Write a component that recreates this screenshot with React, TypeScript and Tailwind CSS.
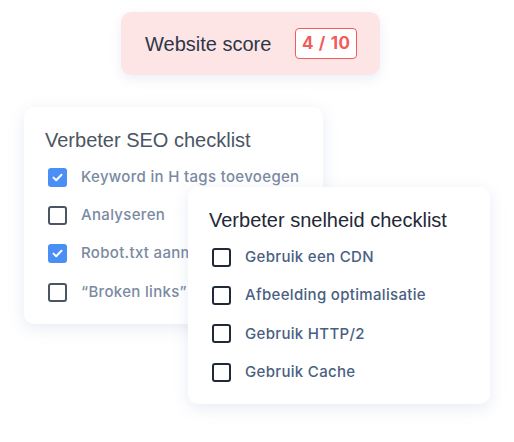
import React from "react";

type Item = { label: string; checked?: boolean };

const seoItems: Item[] = [
  { label: "Keyword in H tags toevoegen", checked: true },
  { label: "Analyseren" },
  { label: "Robot.txt aanmaken", checked: true },
  { label: "“Broken links” fixen" },
];

const speedItems: Item[] = [
  { label: "Gebruik een CDN" },
  { label: "Afbeelding optimalisatie" },
  { label: "Gebruik HTTP/2" },
  { label: "Gebruik Cache" },
];

const Checkbox = ({ checked, dark }: { checked?: boolean; dark?: boolean }) => {
  if (checked) {
    return (
      <span className="flex h-[19px] w-[19px] shrink-0 items-center justify-center rounded-[3px] bg-[#4a8ff5]">
        <svg width="11" height="9" viewBox="0 0 11 9" fill="none">
          <path d="M1.5 4.6L4.2 7.2L9.5 1.8" stroke="white" strokeWidth="2" strokeLinecap="round" strokeLinejoin="round" />
        </svg>
      </span>
    );
  }
  return (
    <span
      className={`h-[19px] w-[19px] shrink-0 rounded-[3px] border-2 ${
        dark ? "border-[#1f2937]" : "border-[#4b5563]"
      }`}
    />
  );
};

const Checklist = ({
  title,
  items,
  dark,
  className,
}: {
  title: string;
  items: Item[];
  dark?: boolean;
  className: string;
}) => (
  <div
    className={`rounded-[10px] bg-white pt-[19px] pb-[20px] pl-[21px] shadow-[0_4px_16px_rgba(148,163,200,0.22)] ${className}`}
  >
    <h2
      className={`whitespace-nowrap text-[20px] leading-[28px] font-['Liberation_Sans',Arial,sans-serif] ${
        dark ? "text-[#1f2937]" : "text-[#4b5563]"
      }`}
    >
      {title}
    </h2>
    <ul className="mt-[11px] flex flex-col gap-[14px] pl-[3px]">
      {items.map((item) => (
        <li key={item.label} className="flex h-[24.3px] items-center gap-[14px]">
          <Checkbox checked={item.checked} dark={dark} />
          <span
            className={`whitespace-nowrap text-[15px] font-medium tracking-[0.32px] font-['Inter',sans-serif] ${
              dark ? "text-[#4a5f82]" : "text-[#7a8aa2]"
            }`}
          >
            {item.label}
          </span>
        </li>
      ))}
    </ul>
  </div>
);

export default function App() {
  return (
    <div className="h-[442px] w-[514px] overflow-hidden bg-white pt-[12px]">
      {/* Score */}
      <div className="ml-[121px] flex h-[63px] w-[259px] items-center rounded-[10px] bg-[#fee5e5] pl-[24px] shadow-[0_4px_12px_rgba(148,163,200,0.18)]">
        <span className="text-[20px] text-[#2d3748] font-['Liberation_Sans',Arial,sans-serif]">
          Website score
        </span>
        <span className="ml-[24px] flex h-[31px] w-[62px] items-center justify-center rounded-[4px] border border-[#f25c5c] bg-white text-[17px] font-bold tracking-[0.6px] text-[#f25c5c] font-['Inter',sans-serif]">
          4 / 10
        </span>
      </div>

      {/* SEO checklist */}
      <Checklist
        title="Verbeter SEO checklist"
        items={seoItems}
        className="relative z-0 ml-[24px] mt-[32px] w-[299px] overflow-hidden"
      />

      {/* Snelheid checklist */}
      <Checklist
        title="Verbeter snelheid checklist"
        items={speedItems}
        dark
        className="relative z-10 ml-[188px] mt-[-137px] w-[302px]"
      />
    </div>
  );
}
